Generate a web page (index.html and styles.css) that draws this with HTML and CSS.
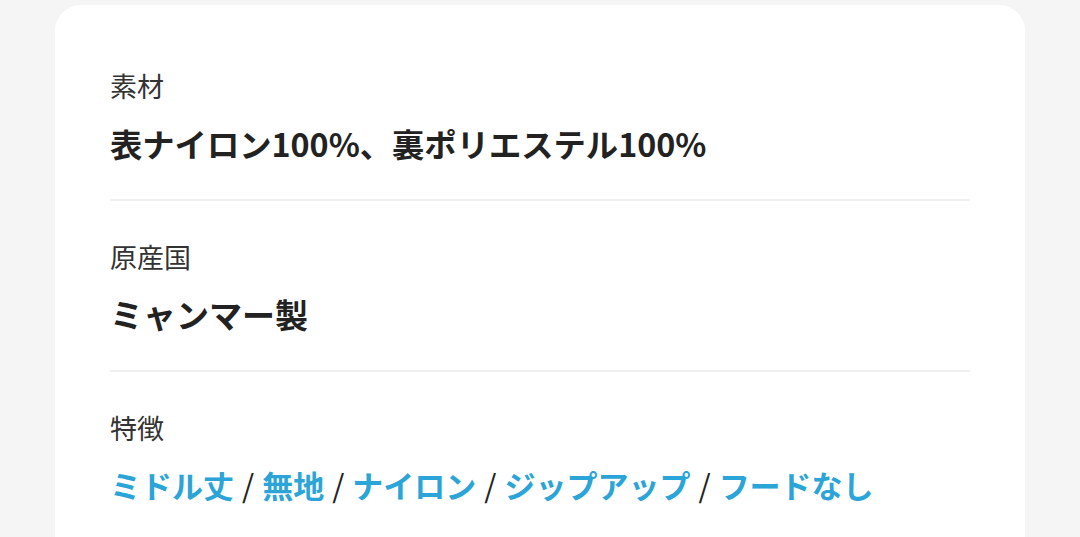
FILE: index.html
```html
<!DOCTYPE html>
<html lang="ja">
<head>
<meta charset="utf-8">
<link rel="stylesheet" href="styles.css">
</head>
<body>
<div class="page">
  <div class="card">
    <section class="item">
      <div class="label">素材</div>
      <div class="value value-long">表ナイロン100%、裏ポリエステル100%</div>
    </section>
    <section class="item">
      <div class="label">原産国</div>
      <div class="value">ミャンマー製</div>
    </section>
    <section class="item last">
      <div class="label">特徴</div>
      <div class="value tags"><a class="tag">ミドル丈</a><span class="sep">/</span><a class="tag">無地</a><span class="sep">/</span><a class="tag">ナイロン</a><span class="sep">/</span><a class="tag">ジップアップ</a><span class="sep">/</span><a class="tag">フードなし</a></div>
    </section>
  </div>
</div>
</body>
</html>
```
FILE: styles.css
```css
html, body {
  margin: 0;
  padding: 0;
  background: #f5f5f5;
  font-family: "Noto Sans CJK JP", "Noto Sans", sans-serif;
  overflow: hidden;
}
.page {
  padding: 5px 55px 0 55px;
}
.card {
  background: #ffffff;
  border-radius: 26px;
  padding: 25px 55px 20px 55px;
  min-height: 600px;
}
.item {
  padding: 38px 0 34px 0;
  border-bottom: 2px solid #f0f0f0;
}
.item.last {
  border-bottom: none;
}
.label {
  font-size: 27px;
  line-height: 36px;
  color: #333333;
  margin-bottom: 17px;
}
.value {
  font-size: 33px;
  line-height: 44px;
  font-weight: 700;
  color: #222222;
}
.value-long {
  font-size: 32.3px;
}
.value.tags {
  font-size: 31px;
}
.tag {
  color: #2ba4d7;
}
.sep {
  color: #222222;
  font-weight: 400;
  margin: 0 8px;
}
```
